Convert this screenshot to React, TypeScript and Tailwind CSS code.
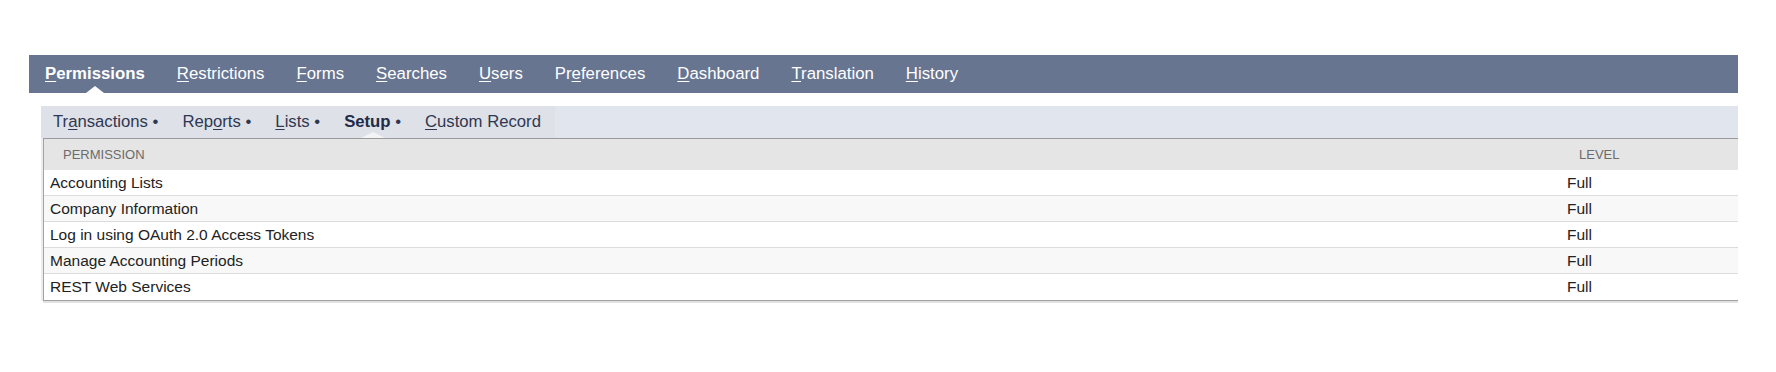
import React from "react";

const font = { fontFamily: '"Liberation Sans", Arial, Helvetica, sans-serif' };

type Tab = { pre: string; key: string; post: string; bold?: boolean; active?: boolean };

const topTabs: Tab[] = [
  { pre: "", key: "P", post: "ermissions", bold: true, active: true },
  { pre: "", key: "R", post: "estrictions" },
  { pre: "", key: "F", post: "orms" },
  { pre: "", key: "S", post: "earches" },
  { pre: "", key: "U", post: "sers" },
  { pre: "Pr", key: "e", post: "ferences" },
  { pre: "", key: "D", post: "ashboard" },
  { pre: "", key: "T", post: "ranslation" },
  { pre: "", key: "H", post: "istory" },
];

type SubTab = { pre: string; key: string; post: string; bold?: boolean; active?: boolean; bullet: boolean };

const subTabs: SubTab[] = [
  { pre: "Tr", key: "a", post: "nsactions", bullet: true },
  { pre: "Rep", key: "o", post: "rts", bullet: true },
  { pre: "", key: "L", post: "ists", bullet: true },
  { pre: "Setup", key: "", post: "", bold: true, active: true, bullet: true },
  { pre: "", key: "C", post: "ustom Record", bullet: false },
];

const rows = [
  "Accounting Lists",
  "Company Information",
  "Log in using OAuth 2.0 Access Tokens",
  "Manage Accounting Periods",
  "REST Web Services",
];

export default function App() {
  return (
    <div className="w-[1776px] h-[372px] bg-white overflow-hidden" style={font}>
      <div className="ml-[29px] mt-[55px] w-[1709px]">
        {/* Top tab bar */}
        <div className="h-[38px] bg-[#687591] flex items-stretch">
          {topTabs.map((t, i) => (
            <div
              key={i}
              className={`relative flex items-center px-4 text-[16.8px] text-white ${t.bold ? "font-bold" : ""}`}
            >
              <span>
                {t.pre}
                <u className="underline underline-offset-[2px]">{t.key}</u>
                {t.post}
              </span>
              {t.active && (
                <span className="absolute bottom-0 left-1/2 -translate-x-1/2 w-0 h-0 border-l-[9px] border-r-[9px] border-b-[7px] border-l-transparent border-r-transparent border-b-white" />
              )}
            </div>
          ))}
        </div>

        {/* Sub tab bar */}
        <div className="ml-[12px] mt-[13px] h-[32px] bg-[#e1e5ed] flex items-stretch">
          <div className="flex items-stretch bg-[#dee1e7] pr-[2px]">
            {subTabs.map((t, i) => (
              <div
                key={i}
                className={`relative flex items-center px-3 text-[16.7px] ${t.bold ? "font-bold text-[#222c49]" : "text-[#2e3852]"}`}
              >
                <span>
                  {t.pre}
                  {t.key && <u className="underline underline-offset-[2px]">{t.key}</u>}
                  {t.post}
                  {t.bullet && <span className="font-normal text-[#2e3852]"> •</span>}
                </span>
                {t.active && (
                  <span className="absolute bottom-0 left-1/2 -translate-x-1/2 w-0 h-0 border-l-[12px] border-r-[12px] border-b-[6px] border-l-transparent border-r-transparent border-b-[#f3f4f6]" />
                )}
              </div>
            ))}
          </div>
        </div>

        {/* Table */}
        <div className="ml-[14px] border-l border-t border-b border-l-[#a3a3a3] border-t-[#9a9a9a] border-b-[#a0a0a0] shadow-[0_2px_0_#e2e2e2,-2px_0_0_#ececec]">
          <div className="grid grid-cols-[1516px_1fr] h-[31px] bg-[#e5e5e5] text-[13px] text-[#6b6b6b] items-center">
            <div className="pl-[19px]">PERMISSION</div>
            <div className="pl-[19px]">LEVEL</div>
          </div>
          {rows.map((r, i) => (
            <div
              key={i}
              className={`grid grid-cols-[1516px_1fr] h-[26px] items-center text-[15.5px] text-[#222] ${
                i % 2 === 1 ? "bg-[#f8f8f8]" : "bg-white"
              } ${i < rows.length - 1 ? "border-b border-[#dcdcdc]" : ""}`}
            >
              <div className="pl-[6px]">{r}</div>
              <div className="pl-[7px]">Full</div>
            </div>
          ))}
        </div>
      </div>
    </div>
  );
}
